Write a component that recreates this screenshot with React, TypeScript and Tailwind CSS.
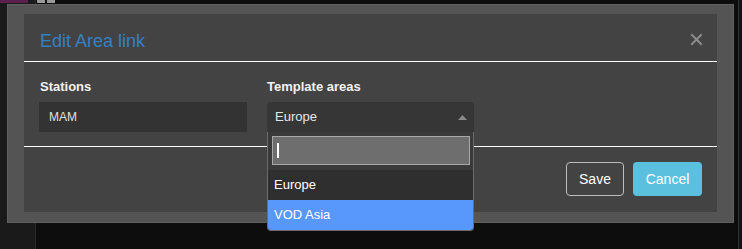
import React from "react";

export default function App() {
  const font = { fontFamily: '"Liberation Sans", Arial, sans-serif' };
  return (
    <div
      className="relative w-[742px] h-[249px] overflow-hidden bg-[#0d0d0d] flex"
      style={font}
    >
      {/* page behind the modal */}
      <div className="w-[36px] h-full bg-[#1a1a1a] border-r border-[#2a2a2a] flex flex-col">
        <div className="h-[3px] w-[28px] bg-[#5a1f4c]" />
      </div>
      <div className="flex-1 h-full flex flex-col">
        <div className="h-[3px] flex gap-[2px] pl-[1px]">
          <div className="w-[8px] h-full bg-[#9a9a9a]" />
          <div className="w-[8px] h-full bg-[#9a9a9a]" />
        </div>
      </div>
      <div className="w-[4px] h-full bg-[#141414] border-l border-[#2a3440]" />

      {/* modal */}
      <div className="absolute left-[7px] top-[4px] w-[727px] h-[219px] bg-[#545454] border border-[#606060] pt-[9px] px-[16px]">
        <div className="w-[693px] h-[198px] bg-[#434343] flex flex-col">
          {/* header */}
          <div className="h-[48px] border-b border-white flex items-center justify-between pt-[6px] pl-[16px] pr-[14px]">
            <span className="text-[18px] leading-none text-[#3580c2]">Edit Area link</span>
            <svg width="13" height="13" viewBox="0 0 13 13" className="-mt-[3px]">
              <path d="M2 2 L11 11 M11 2 L2 11" stroke="#8c8c8c" strokeWidth="2" strokeLinecap="square" />
            </svg>
          </div>

          {/* body */}
          <div className="h-[85px] border-b border-white pt-[17px] px-[15px] grid grid-cols-[208px_207px] gap-x-[20px] items-start">
            <div className="flex flex-col">
              <div className="text-[13px] leading-[15px] font-bold text-[#f2f2f2] pl-px mb-[8px]">Stations</div>
              <div className="h-[30px] bg-[#333333] pl-[10px] flex items-center text-[12px] font-medium text-[#e0e0e0]">MAM</div>
            </div>
            <div className="flex flex-col">
              <div className="text-[13px] leading-[15px] font-bold text-[#f2f2f2] mb-[8px]">Template areas</div>
              <div className="relative h-[30px] bg-[#363636] rounded-t-[4px] pl-[8px] pr-[7px] flex items-center justify-between text-[13px] text-[#e6e6e6]">
                <span>Europe</span>
                <svg width="9" height="5" viewBox="0 0 9 5">
                  <path d="M0 5 L4.5 0 L9 5 Z" fill="#8a8a8a" />
                </svg>
                {/* dropdown */}
                <div className="absolute left-0 top-full w-full z-10 bg-[#3a3a3a] border-x border-b border-[#6c6c6c] rounded-b-[4px] overflow-hidden flex flex-col">
                  <div className="pt-[4px] pb-[5px] pl-[4px] pr-[3px]">
                    <div className="h-[29px] bg-[#6e6e6e] border border-[#a8a8a8] flex items-center pl-[4px]">
                      <span className="w-[2px] h-[15px] bg-white" />
                    </div>
                  </div>
                  <div className="h-[30px] bg-[#2f2f2f] pl-[6px] flex items-center text-[13px] text-white">Europe</div>
                  <div className="h-[30px] bg-[#5897fb] pl-[6px] flex items-center text-[13px] text-white">VOD Asia</div>
                </div>
              </div>
            </div>
          </div>

          {/* footer */}
          <div className="flex-1 flex justify-end items-start pt-[15px] pr-[15px] gap-[9px]">
            <button className="h-[34px] w-[58px] border border-[#bdbdbd] rounded-[4px] text-[14px] text-white flex items-center justify-center">
              Save
            </button>
            <button className="h-[34px] w-[69px] bg-[#5bc0de] rounded-[4px] text-[14px] text-white flex items-center justify-center">
              Cancel
            </button>
          </div>
        </div>
      </div>
    </div>
  );
}
